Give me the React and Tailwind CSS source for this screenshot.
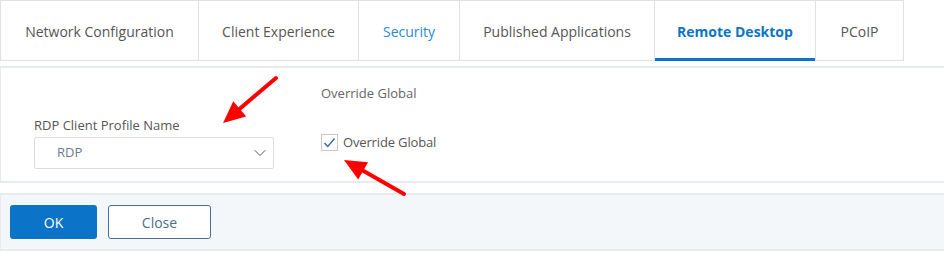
import { ChevronDown } from 'lucide-react'

const tabs = [
  { label: 'Network Configuration', w: 'w-[198px]', cls: 'text-[#555]' },
  { label: 'Client Experience', w: 'w-[160px]', cls: 'text-[#555]' },
  { label: 'Security', w: 'w-[101px]', cls: 'text-[#2b8ad4]' },
  { label: 'Published Applications', w: 'w-[195px]', cls: 'text-[#555]' },
  { label: 'Remote Desktop', w: 'w-[161px]', cls: 'text-[#0b74c8] font-bold', active: true },
  { label: 'PCoIP', w: 'w-[88px]', cls: 'text-[#555]' },
]

function Arrow({ x1, y1, x2, y2 }) {
  // line from tail (x1,y1) to tip (x2,y2) with a filled head
  const a = Math.atan2(y2 - y1, x2 - x1)
  const len = 22, half = 10
  const bx = x2 - len * Math.cos(a), by = y2 - len * Math.sin(a)
  const p1 = [bx + half * Math.sin(a), by - half * Math.cos(a)]
  const p2 = [bx - half * Math.sin(a), by + half * Math.cos(a)]
  return (
    <g>
      <line x1={x1} y1={y1} x2={bx} y2={by} stroke="#f00" strokeWidth="4" strokeLinecap="round" />
      <polygon points={`${x2},${y2} ${p1.join(',')} ${p2.join(',')}`} fill="#f00" />
    </g>
  )
}

export default function App() {
  return (
    <div className="relative w-[944px] h-[277px] bg-white font-['Open_Sans',sans-serif] text-[13px]">
      {/* Tabs */}
      <div className="flex w-[904px] h-[61px] border-t border-b border-l border-[#e1e1e1]">
        {tabs.map((t) => (
          <div key={t.label} className={`${t.w} relative flex items-center justify-center border-r border-[#e1e1e1] text-[14px] pt-px ${t.cls}`}>
            {t.label}
            {t.active && <div className="absolute left-0 right-0 -bottom-px h-[3px] bg-[#0b74c8]" />}
          </div>
        ))}
      </div>

      {/* Panel */}
      <div className="mt-[5px] h-[117px] border-t-2 border-b-2 border-l border-[#e8ebee] flex">
        <div className="pl-[33px] pt-[49px] w-[320px]">
          <p className="text-[13px] text-[#555] leading-[16px]">RDP Client Profile Name</p>
          <div className="mt-[4px] w-[240px] h-[32px] border border-[#dcdcdc] rounded-[2px] flex items-center justify-between pl-[22px] pr-[3px]">
            <span className="text-[13px] text-[#6b7a8a]">RDP</span>
            <ChevronDown size={20} strokeWidth={1.2} className="text-[#555]" />
          </div>
        </div>
        <div className="pt-[17px]">
          <p className="text-[13px] text-[#666] leading-[16px]">Override Global</p>
          <div className="mt-[33px] flex items-center gap-[5px] h-[17px]">
            <div className="w-[17px] h-[17px] border border-[#c8c8c8] flex items-center justify-center">
              <svg width="13" height="11" viewBox="0 0 13 11">
                <path d="M1.5 6 L4.8 9.5 L11.5 1.5" fill="none" stroke="#2f6aa6" strokeWidth="1.4" />
              </svg>
            </div>
            <span className="text-[13px] text-[#555] leading-[17px] tracking-[-0.15px]">Override Global</span>
          </div>
        </div>
      </div>

      {/* Footer */}
      <div className="mt-[10px] h-[58px] border-t-2 border-b-2 border-l border-[#e8ebee] bg-[#f4f7fa] flex items-center gap-[11px] pl-[9px]">
        <button className="w-[87px] h-[34px] rounded-[3px] bg-[#0b74c8] text-white text-[14px]">OK</button>
        <button className="w-[103px] h-[34px] rounded-[3px] bg-white border border-[#4a6f93] text-[#486f92] text-[14px]">Close</button>
      </div>

      {/* Annotation arrows */}
      <svg className="absolute inset-0 pointer-events-none" width="944" height="277">
        <Arrow x1={276} y1={78} x2={223} y2={123} />
        <Arrow x1={404} y1={194} x2={344} y2={160} />
      </svg>
    </div>
  )
}
